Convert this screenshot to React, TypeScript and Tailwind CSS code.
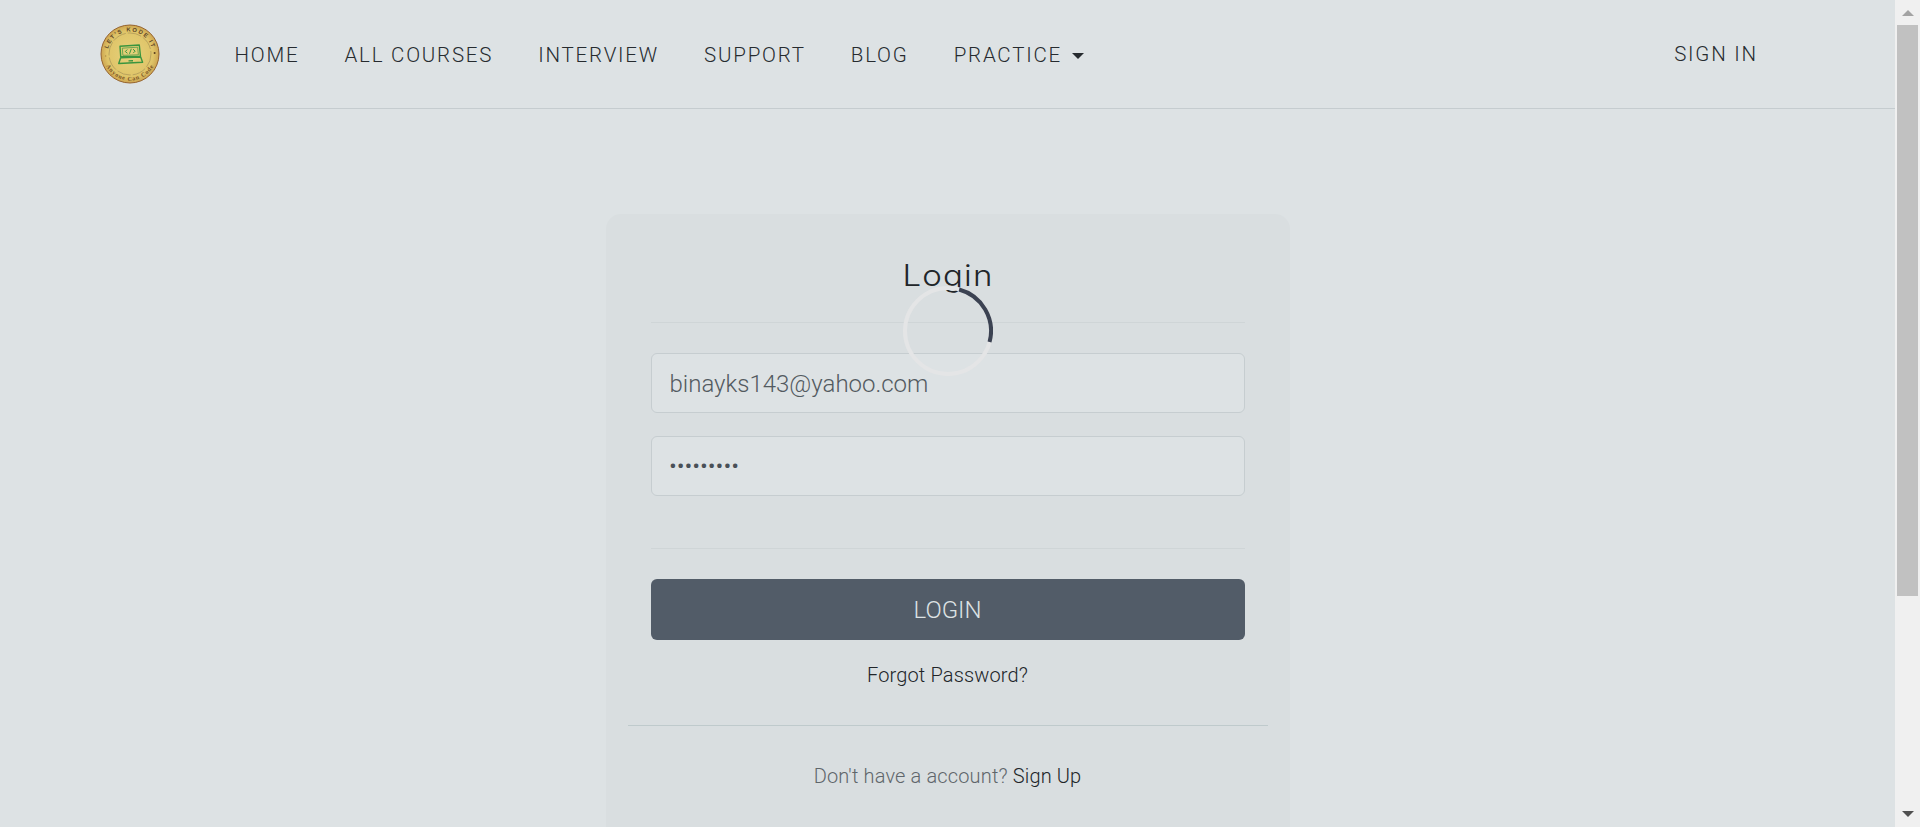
import React from "react";

const navItems = ["HOME", "ALL COURSES", "INTERVIEW", "SUPPORT", "BLOG"];

function Logo() {
  return (
    <svg viewBox="0 0 60 60" className="-mt-px block h-[60px] w-[60px]" aria-label="Let's Kode It">
      <defs>
        <radialGradient id="coin">
          <stop offset="0" stopColor="#e6d27c" />
          <stop offset="0.8" stopColor="#dfc468" />
          <stop offset="1" stopColor="#cda550" />
        </radialGradient>
        <path id="arcTop" d="M7.500 30a22.500 22.500 0 0 1 45 0" />
        <path id="arcBottom" d="M3.500 30a26.500 26.500 0 0 0 53 0" />
      </defs>
      <circle cx="30" cy="30" r="29" fill="url(#coin)" stroke="#96642f" strokeWidth="1" />
      <circle cx="30" cy="30" r="21" fill="none" stroke="#a89458" strokeWidth="0.7" strokeDasharray="14 2" />
      <text fontSize="5.800" fontWeight="700" fill="#5a4326" fontFamily="Liberation Sans, sans-serif" textAnchor="middle" letterSpacing="1.400">
        <textPath href="#arcTop" startOffset="50%">LET'S KODE IT</textPath>
      </text>
      <text fontSize="6" fontWeight="700" fill="#7a5527" fontFamily="Liberation Serif, serif" textAnchor="middle" letterSpacing="0.800">
        <textPath href="#arcBottom" startOffset="50%">Anyone Can Code</textPath>
      </text>
      <circle cx="5.600" cy="32" r="0.8" fill="#b08c48" />
      <circle cx="54.600" cy="29" r="1" fill="#5a3d20" />
      <g fill="none" stroke="#3a953f" strokeWidth="1.400" strokeLinejoin="round">
        <path d="M20 22.300L39.300 21l1.200 11.300-19.800.5z" />
        <path d="M22.300 24.200l15.300-1 .8 7.600-15.500.5z" strokeWidth="0.7" />
        <path d="M20.700 33.700l20-.6 1.900 5.200-23.900 1.200z" />
        <path d="M28.500 36.900l4.500-.2" />
        <path d="M27.300 25.500l-2 2 2.200 1.800M33 25.200l2.200 1.900-2 2M31.300 24.800l-1.800 5" strokeWidth="1" />
      </g>
    </svg>
  );
}

function Header() {
  return (
    <header className="flex h-[109px] items-center border-b border-[#c5cccf] pr-[137px] pl-[100px] text-[20.5px] font-light text-[#262b2f]">
      <Logo />
      <nav className="mt-[2px] ml-[74.5px] flex items-center gap-[45.1px] tracking-[1.78px] whitespace-nowrap">
        {navItems.map((item) => (
          <a key={item} href="#">{item}</a>
        ))}
        <a href="#" className="flex items-center">
          PRACTICE
          <span className="mt-[2px] ml-[10px] h-0 w-0 border-x-[6px] border-t-[6px] border-x-transparent border-t-[#262b2f]" />
        </a>
      </nav>
      <a href="#" className="ml-auto tracking-[1.8px] whitespace-nowrap">SIGN IN</a>
    </header>
  );
}

function Spinner() {
  return (
    <svg viewBox="0 0 90 90" className="absolute top-[72px] left-[297px] h-[90px] w-[90px]" fill="none" strokeWidth="4">
      <circle cx="45" cy="45" r="43" stroke="#e4e5e6" />
      <path d="M56.100 3.460A43 43 0 0 1 86.540 56.100" stroke="#3b4252" />
    </svg>
  );
}

function LoginCard() {
  return (
    <section className="relative mt-[105px] ml-[606px] h-[700px] w-[684px] rounded-[15px] bg-[#d9dee0] px-[22px] font-light">
      <div className="px-[23px]">
        <h1 className="flex h-[108px] scale-x-112 items-center justify-center pt-[15px] font-['Inter',sans-serif] text-[29.5px] leading-none tracking-[1px] text-[#212529]">
          Login
        </h1>
        <hr className="border-[#cfd5d7]" />
        <input
          type="text"
          defaultValue="binayks143@yahoo.com"
          className="mt-[30px] block h-[60px] w-full rounded-[6px] border border-[#c6cdd0] bg-[#dde2e4] px-[17.500px] pt-px text-[24px] text-[#535a60]"
        />
        <input
          type="password"
          defaultValue="kodeit143"
          className="mt-[23px] block h-[60px] w-full rounded-[6px] border border-[#c6cdd0] bg-[#dde2e4] px-[17px] text-[24px] text-[#495057]"
        />
        <hr className="mt-[52px] border-[#cfd5d7]" />
        <button className="mt-[30px] block h-[61px] w-full rounded-[6px] bg-[#525c68] pt-px pr-px text-[24px] text-[#dde2e4]">
          LOGIN
        </button>
        <a href="#" className="mt-[20px] block pr-px text-center text-[20px] leading-[30px] tracking-[0.15px] text-[#212529]">
          Forgot Password?
        </a>
      </div>
      <hr className="mt-[35px] border-[#bfcacc]" />
      <p className="mt-[35px] pr-px text-center text-[20px] leading-[30px] tracking-[0.15px] text-[#5f666b]">
        Don't have a account? <a href="#" className="text-[#212529]">Sign Up</a>
      </p>
      <Spinner />
    </section>
  );
}

function Scrollbar() {
  return (
    <div className="flex w-[25px] flex-col items-center bg-[#f0f0f0]">
      <div className="mt-[10px] h-0 w-0 border-x-[6px] border-b-[6px] border-x-transparent border-b-[#a3a3a3]" />
      <div className="mt-[9px] h-[571px] w-[21px] bg-[#c1c1c1]" />
      <div className="mt-auto mb-[10px] h-0 w-0 border-x-[6px] border-t-[6px] border-x-transparent border-t-[#505050]" />
    </div>
  );
}

export default function App() {
  return (
    <div className="flex h-[827px] w-[1920px] overflow-hidden bg-[#dde2e4] font-['Roboto',sans-serif]">
      <main className="h-full w-[1895px] overflow-hidden">
        <Header />
        <LoginCard />
      </main>
      <Scrollbar />
    </div>
  );
}
